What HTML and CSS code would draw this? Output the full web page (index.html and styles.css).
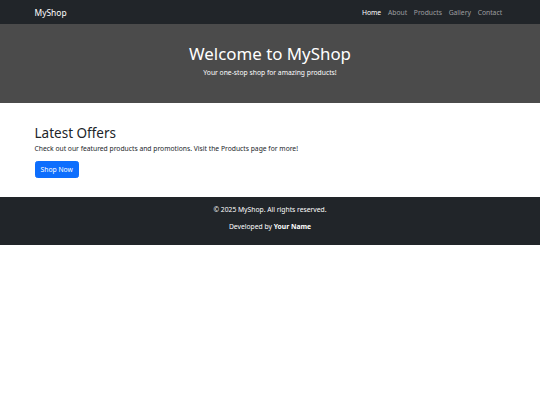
FILE: index.html
```html
<!DOCTYPE html>
<html lang="en">
<head>
<meta charset="utf-8">
<title>MyShop</title>
<link rel="stylesheet" href="styles.css">
</head>
<body>
<nav class="navbar">
  <div class="container nav-inner">
    <a class="brand" href="#">MyShop</a>
    <ul class="nav-links">
      <li><a class="nav-link active" href="#">Home</a></li>
      <li><a class="nav-link" href="#">About</a></li>
      <li><a class="nav-link" href="#">Products</a></li>
      <li><a class="nav-link" href="#">Gallery</a></li>
      <li><a class="nav-link" href="#">Contact</a></li>
    </ul>
  </div>
</nav>
<header class="hero">
  <div class="container">
    <h1 class="hero-title">Welcome to MyShop</h1>
    <p class="hero-sub">Your one-stop shop for amazing products!</p>
  </div>
</header>
<main class="offers">
  <div class="container">
    <h2 class="offers-title">Latest Offers</h2>
    <p class="offers-text">Check out our featured products and promotions. Visit the Products page for more!</p>
    <a class="btn-primary" href="#">Shop Now</a>
  </div>
</main>
<footer class="footer">
  <div class="container">
    <p class="footer-line">© 2025 MyShop. All rights reserved.</p>
    <p class="footer-line">Developed by <strong>Your Name</strong></p>
  </div>
</footer>
</body>
</html>
```

FILE: styles.css
```css
* { box-sizing: border-box; }
html, body { margin: 0; padding: 0; }
body {
  font-family: "Noto Sans", "Open Sans", "Liberation Sans", sans-serif;
  font-size: 6.75px;
  line-height: 1.5;
  color: #212529;
  background: #fff;
}
a { text-decoration: none; }
p { margin: 0; }
.container {
  max-width: 481px;
  margin: 0 auto;
  padding: 0 5.06px;
}
.navbar {
  background: #212529;
  padding: 4.4px 0 2.35px;
}
.nav-inner {
  display: flex;
  align-items: center;
  justify-content: space-between;
}
.brand {
  color: #fff;
  font-size: 8.44px;
  line-height: 1.5;
  padding: 2.11px 0;
  margin-right: 6.75px;
}
.nav-links {
  display: flex;
  list-style: none;
  margin: 0;
  padding: 0;
}
.nav-link {
  display: block;
  padding: 3.375px 3.375px;
  color: rgba(255, 255, 255, 0.55);
}
.nav-link.active { color: #fff; }
.hero {
  background: #4b4b4b;
  color: #fff;
  text-align: center;
  padding: 20.4px 0 18.3px;
}
.hero-title {
  margin: 0 0 3.375px;
  font-size: 16.875px;
  font-weight: 400;
  line-height: 1.2;
}
.hero-sub { margin-bottom: 6.75px; }
.offers { padding: 21.9px 0 19.1px; }
.offers-title {
  margin: 0 0 3.375px;
  font-size: 13.5px;
  font-weight: 400;
  line-height: 1.2;
}
.offers-text { margin-bottom: 6.75px; }
.btn-primary {
  display: inline-block;
  background: #0d6efd;
  color: #fff;
  border: 0.42px solid #0d6efd;
  border-radius: 2.53px;
  padding: 2.53px 5.06px;
  line-height: 1.5;
}
.footer {
  background: #212529;
  color: #fff;
  text-align: center;
  padding: 7.7px 0 5.8px;
}
.footer-line { margin-bottom: 6.75px; }
.footer strong { font-weight: 700; }
```
